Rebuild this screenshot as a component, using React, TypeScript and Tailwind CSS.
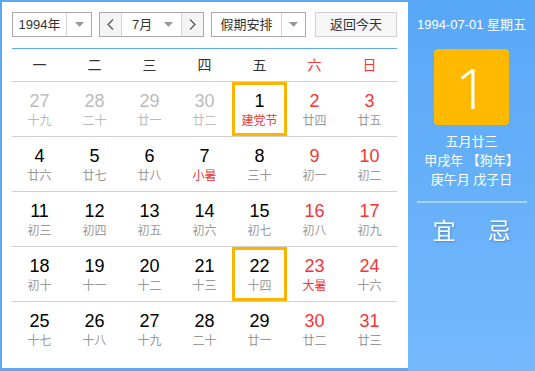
import React from "react";

type Day = {
  n: number;
  lunar: string;
  other?: boolean;
  red?: boolean;
  fest?: boolean;
  sel?: boolean;
};

const weeks: Day[][] = [
  [
    { n: 27, lunar: "十九", other: true },
    { n: 28, lunar: "二十", other: true },
    { n: 29, lunar: "廿一", other: true },
    { n: 30, lunar: "廿二", other: true },
    { n: 1, lunar: "建党节", fest: true, sel: true },
    { n: 2, lunar: "廿四", red: true },
    { n: 3, lunar: "廿五", red: true },
  ],
  [
    { n: 4, lunar: "廿六" },
    { n: 5, lunar: "廿七" },
    { n: 6, lunar: "廿八" },
    { n: 7, lunar: "小暑", fest: true },
    { n: 8, lunar: "三十" },
    { n: 9, lunar: "初一", red: true },
    { n: 10, lunar: "初二", red: true },
  ],
  [
    { n: 11, lunar: "初三" },
    { n: 12, lunar: "初四" },
    { n: 13, lunar: "初五" },
    { n: 14, lunar: "初六" },
    { n: 15, lunar: "初七" },
    { n: 16, lunar: "初八", red: true },
    { n: 17, lunar: "初九", red: true },
  ],
  [
    { n: 18, lunar: "初十" },
    { n: 19, lunar: "十一" },
    { n: 20, lunar: "十二" },
    { n: 21, lunar: "十三" },
    { n: 22, lunar: "十四", sel: true },
    { n: 23, lunar: "大暑", red: true, fest: true },
    { n: 24, lunar: "十六", red: true },
  ],
  [
    { n: 25, lunar: "十七" },
    { n: 26, lunar: "十八" },
    { n: 27, lunar: "十九" },
    { n: 28, lunar: "二十" },
    { n: 29, lunar: "廿一" },
    { n: 30, lunar: "廿二", red: true },
    { n: 31, lunar: "廿三", red: true },
  ],
];

const font = { fontFamily: '"Liberation Sans", "Noto Sans CJK SC", sans-serif' };

function Caret() {
  return (
    <svg width="9" height="5" viewBox="0 0 9 5">
      <path d="M0 0h9L4.5 5z" fill="#999" />
    </svg>
  );
}

function Chevron({ dir }: { dir: "l" | "r" }) {
  return (
    <svg width="7" height="11" viewBox="0 0 7 11">
      <path
        d={dir === "l" ? "M6 0.5L1 5.5L6 10.5" : "M1 0.5L6 5.5L1 10.5"}
        stroke="#555"
        strokeWidth="1.2"
        fill="none"
      />
    </svg>
  );
}

export default function App() {
  return (
    <div className="w-[535px] h-[371px] flex bg-[#5aa8f6] text-[#333]" style={font}>
      {/* 日历主体 */}
      <div className="w-[406px] h-[366px] mt-[2px] ml-[2px] bg-white pl-[10px] pr-[11px] pt-[10px]">
        {/* 控件 */}
        <div className="flex h-[25px] text-[13px]">
          <div className="flex w-[80px] border border-[#a9a9a9]">
            <div className="w-[54px] flex items-center justify-center border-r border-[#d5d5d5]">1994年</div>
            <div className="flex-1 flex items-center justify-center">
              <Caret />
            </div>
          </div>
          <div className="flex w-[105px] ml-[7px] border border-[#a9a9a9]">
            <div className="w-[22px] shrink-0 flex items-center justify-center bg-[#f4f4f4] border-r border-[#d5d5d5]">
              <Chevron dir="l" />
            </div>
            <div className="w-[60px] shrink-0 flex items-center pl-[10px] pr-[8px] justify-between border-r border-[#d5d5d5]">
              <span>7月</span>
              <Caret />
            </div>
            <div className="flex-1 flex items-center justify-center bg-[#f4f4f4]">
              <Chevron dir="r" />
            </div>
          </div>
          <div className="flex w-[95px] ml-[7px] border border-[#a9a9a9]">
            <div className="w-[70px] flex items-center justify-center border-r border-[#d5d5d5]">假期安排</div>
            <div className="flex-1 flex items-center justify-center">
              <Caret />
            </div>
          </div>
          <div className="w-[82px] ml-[9px] border border-[#cfcfcf] bg-[#f7f7f7] flex items-center justify-center">
            返回今天
          </div>
        </div>

        {/* 星期 */}
        <div className="mt-[11px] border-t border-[#5aa8f6] grid grid-cols-7 h-[34px] items-center text-[14px] border-b border-b-[#d0d0d0]">
          {["一", "二", "三", "四", "五", "六", "日"].map((w, i) => (
            <div key={w} className={`text-center ${i > 4 ? "text-[#f23636]" : "text-[#333]"}`}>
              {w}
            </div>
          ))}
        </div>

        {/* 日期 */}
        {weeks.map((week, r) => (
          <div key={r} className={`grid grid-cols-7 h-[55px] ${r < 4 ? "border-b border-[#d0d0d0]" : ""}`}>
            {week.map((d, i) => (
              <div
                key={i}
                className={`flex flex-col items-center ${d.sel ? "border-[3px] border-[#ffb400] pt-[5px]" : "pt-[8px]"}`}
              >
                <div
                  className={`text-[18px] leading-[22px] ${
                    d.other ? "text-[#bbbbbb]" : d.red ? "text-[#f23636]" : "text-black"
                  }`}
                >
                  {d.n}
                </div>
                <div
                  className={`text-[12px] leading-[18px] ${
                    d.fest ? "text-[#f23636]" : d.other ? "text-[#bbbbbb]" : "text-[#999]"
                  }`}
                >
                  {d.lunar}
                </div>
              </div>
            ))}
          </div>
        ))}
      </div>

      {/* 右侧 */}
      <div className="flex-1 h-full bg-gradient-to-b from-[#58a7f7] to-[#74b9fc] flex flex-col items-center text-white">
        <div className="mt-[16px] text-[13px] leading-[18px] whitespace-nowrap">1994-07-01 星期五</div>
        <div
          className="mt-[15px] w-[75px] h-[76px] rounded-[4px] bg-[#ffba00] flex items-center justify-center text-[56px] font-light leading-none"
          style={{ fontFamily: '"Noto Sans", sans-serif' }}
        >
          1
        </div>
        <div className="mt-[7px] text-[13px] leading-[19px] text-center">
          <div>五月廿三</div>
          <div>甲戌年 【狗年】</div>
          <div>庚午月 戊子日</div>
        </div>
        <div className="mt-[12px] w-[110px] h-[2px] bg-[#a6d2fb]" />
        <div
          className="mt-[14px] flex gap-[32px] text-[23px] leading-[28px]"
          style={{ textShadow: "1px 1px 2px rgba(0,0,0,0.25)" }}
        >
          <span>宜</span>
          <span>忌</span>
        </div>
      </div>
    </div>
  );
}
